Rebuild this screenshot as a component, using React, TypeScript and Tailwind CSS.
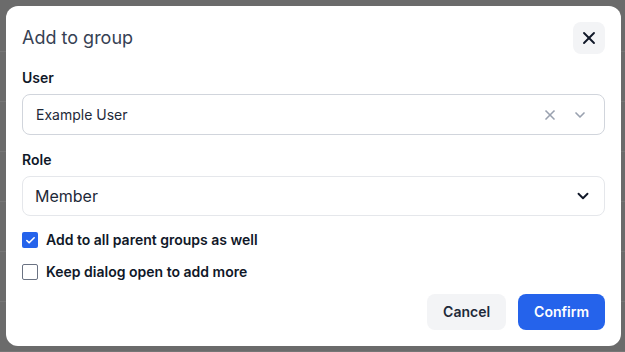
import { X, ChevronDown, Check } from "lucide-react";

export default function App() {
  return (
    <div className="relative h-[352px] w-[625px] overflow-hidden bg-[#6b6b6b] font-['Inter',sans-serif]">
      {/* backdrop rows */}
      <div className="flex flex-col pt-[2px]">
        {Array.from({ length: 7 }).map((_, i) => (
          <div key={i} className="h-[50px] border-b border-[#767676]" />
        ))}
      </div>
      <div className="absolute left-[6px] top-[6px] flex h-[340px] w-[615px] flex-col rounded-xl bg-white p-4">
        {/* header */}
        <div className="flex items-center justify-between">
          <h2 className="text-lg text-gray-700">Add to group</h2>
          <button className="flex h-8 w-8 items-center justify-center rounded-lg bg-gray-100 text-gray-900">
            <X size={20} strokeWidth={2.25} />
          </button>
        </div>

        <label className="mt-[14px] text-sm font-semibold text-gray-900">User</label>
        <div className="mt-[6px] flex h-[41px] items-center rounded-lg border border-gray-300 pl-[13px] pr-4">
          <span className="flex-1 text-sm text-gray-800">Example User</span>
          <X size={16} strokeWidth={2.5} className="mr-[14px] text-gray-400" />
          <ChevronDown size={16} strokeWidth={2.5} className="text-gray-400" />
        </div>

        <label className="mt-[15px] text-sm font-semibold text-gray-900">Role</label>
        <div className="mt-[6px] flex h-10 items-center rounded-lg border border-gray-200 pl-[12px] pr-3">
          <span className="flex-1 text-base text-gray-800">Member</span>
          <ChevronDown size={18} strokeWidth={2.5} className="text-gray-900" />
        </div>

        <div className="mt-[14px] flex flex-col gap-3">
          <div className="flex items-center gap-2">
            <span className="flex h-4 w-4 items-center justify-center rounded-[2px] bg-[#2563eb] text-white">
              <Check size={11} strokeWidth={3.5} />
            </span>
            <span className="text-sm font-semibold text-gray-900">Add to all parent groups as well</span>
          </div>
          <div className="flex items-center gap-2">
            <span className="h-4 w-4 rounded-[2px] border border-gray-500 bg-white" />
            <span className="text-sm font-semibold text-gray-900">Keep dialog open to add more</span>
          </div>
        </div>

        <div className="mt-auto flex justify-end gap-3">
          <button className="h-9 rounded-lg bg-gray-100 px-4 text-sm font-semibold text-gray-800">Cancel</button>
          <button className="h-9 rounded-lg bg-[#2563eb] px-4 text-sm font-semibold text-white">Confirm</button>
        </div>
      </div>
    </div>
  );
}
